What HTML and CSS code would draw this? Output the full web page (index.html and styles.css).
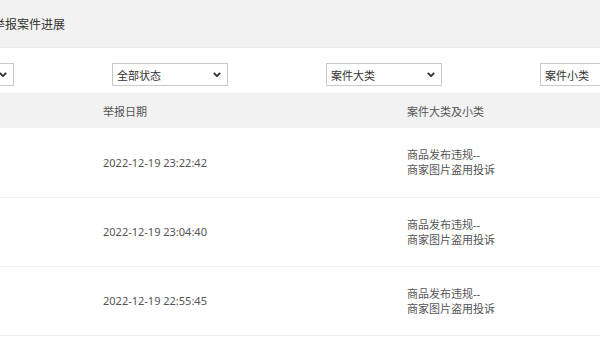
FILE: index.html
```html
<!DOCTYPE html>
<html lang="zh-CN">
<head>
  <meta charset="UTF-8">
  <meta name="viewport" content="width=device-width, initial-scale=1.0">
  <title>举报案件进展</title>
  <link rel="stylesheet" href="styles.css">
</head>
<body>
  <div class="page">
    <div class="title-bar">
      <h1>举报案件进展</h1>
    </div>

    <div class="filters">
      <div class="select"><span></span><svg viewBox="0 0 10 6"><path d="M1 1 L5 5 L9 1"/></svg></div>
      <div class="select"><span>全部状态</span><svg viewBox="0 0 10 6"><path d="M1 1 L5 5 L9 1"/></svg></div>
      <div class="select"><span>案件大类</span><svg viewBox="0 0 10 6"><path d="M1 1 L5 5 L9 1"/></svg></div>
      <div class="select"><span>案件小类</span><svg viewBox="0 0 10 6"><path d="M1 1 L5 5 L9 1"/></svg></div>
    </div>

    <table class="cases">
      <thead>
        <tr>
          <th class="col-id"></th>
          <th class="col-date">举报日期</th>
          <th class="col-type">案件大类及小类</th>
        </tr>
      </thead>
      <tbody>
        <tr>
          <td></td>
          <td>2022-12-19 23:22:42</td>
          <td>商品发布违规--<br>商家图片盗用投诉</td>
        </tr>
        <tr>
          <td></td>
          <td>2022-12-19 23:04:40</td>
          <td>商品发布违规--<br>商家图片盗用投诉</td>
        </tr>
        <tr>
          <td></td>
          <td>2022-12-19 22:55:45</td>
          <td>商品发布违规--<br>商家图片盗用投诉</td>
        </tr>
      </tbody>
    </table>
  </div>
</body>
</html>
```

FILE: styles.css
```css
* {
  margin: 0;
  padding: 0;
  box-sizing: border-box;
}

body {
  font-family: 'Noto Sans', 'Noto Sans CJK SC', sans-serif;
  background-color: #ffffff;
  color: #333;
  overflow: hidden;
}

.page {
  width: 860px;
  margin-left: -110px;
}

.title-bar {
  height: 48px;
  background-color: #f2f2f2;
  border-bottom: 1px solid #e9e9e9;
  display: flex;
  align-items: center;
  padding-left: 103px;
}

h1 {
  font-size: 12px;
  font-weight: 400;
  color: #333;
}

.filters {
  display: grid;
  grid-template-columns: repeat(4, 214px);
  padding: 15px 0 7px 8px;
}

.select {
  width: 116px;
  height: 23px;
  border: 1px solid #c9c9c9;
  display: flex;
  align-items: center;
  justify-content: space-between;
  padding: 0 6px 0 4px;
  font-size: 11px;
  color: #333;
}

.select svg {
  width: 8px;
  height: 5px;
  fill: none;
  stroke: #333;
  stroke-width: 2.4;
}

.cases {
  width: 100%;
  border-collapse: collapse;
  font-size: 11px;
}

.cases th {
  height: 35px;
  background-color: #f2f2f2;
  font-weight: 400;
  color: #555;
  text-align: left;
  padding-left: 13px;
}

.col-id { width: 200px; }
.col-date { width: 304px; }

.cases td {
  height: 69px;
  border-bottom: 1px solid #ececec;
  color: #555;
  padding-left: 13px;
  line-height: 15px;
}
```
